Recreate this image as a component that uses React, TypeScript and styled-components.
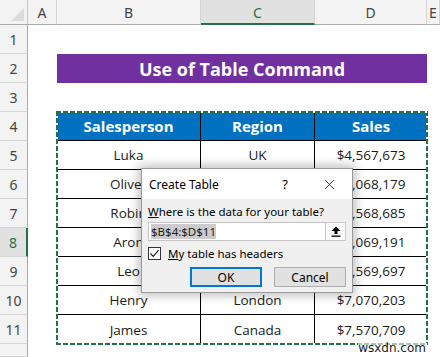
import styled, { createGlobalStyle } from 'styled-components';

const GlobalStyle = createGlobalStyle`
  html, body {
    margin: 0;
    padding: 0;
    background: #ffffff;
    overflow: hidden;
  }
`;

const GREEN = '#217346';

const columns = ['A', 'B', 'C', 'D', 'E'];
const selectedColumn = 'C';
const selectedRow = 8;

const rows = [
  { name: 'Luka', region: 'UK', sales: '$4,567,673' },
  { name: 'Oliver', region: 'USA', sales: '$5,068,179' },
  { name: 'Robin', region: 'Canada', sales: '$5,568,685' },
  { name: 'Aron', region: 'UK', sales: '$6,069,191' },
  { name: 'Leo', region: 'USA', sales: '$6,569,697' },
  { name: 'Henry', region: 'London', sales: '$7,070,203' },
  { name: 'James', region: 'Canada', sales: '$7,570,709' },
];

export default function App() {
  return (
    <Page>
      <GlobalStyle />
      <Sheet>
        <Corner />
        {columns.map((c) => (
          <ColHeader key={c} $selected={c === selectedColumn}>
            {c}
          </ColHeader>
        ))}
        {Array.from({ length: 12 }, (_, i) => (
          <RowHeader key={i} $row={i + 1} $selected={i + 1 === selectedRow}>
            {i < 11 ? i + 1 : ''}
          </RowHeader>
        ))}

        <TitleBar>Use of Table Command</TitleBar>

        <DataTable>
          <HeadCell>Salesperson</HeadCell>
          <HeadCell>Region</HeadCell>
          <HeadCell $last>Sales</HeadCell>
          {rows.map((r, i) => {
            const bottom = i === rows.length - 1;
            return [
              <Cell key={`n${i}`} $bottom={bottom}>
                {r.name}
              </Cell>,
              <Cell key={`r${i}`} $bottom={bottom}>
                {r.region}
              </Cell>,
              <Cell key={`s${i}`} $bottom={bottom} $last>
                {r.sales}
              </Cell>,
            ];
          })}
          <Marquee />
        </DataTable>
      </Sheet>

      <Dialog>
        <DialogTitle>
          <span>Create Table</span>
          <TitleButtons>
            <span>?</span>
            <CloseIcon viewBox="0 0 12 12">
              <path d="M1 1 L11 11 M11 1 L1 11" stroke="#333" strokeWidth="1" />
            </CloseIcon>
          </TitleButtons>
        </DialogTitle>
        <DialogBody>
          <FieldLabel>
            <u>W</u>here is the data for your table?
          </FieldLabel>
          <RangeInput>
            <RangeText>
              <Selected>$B$4:$D$11</Selected>
            </RangeText>
            <RangeButton>
              <svg width="10" height="11" viewBox="0 0 10 11">
                <path d="M5 0.5 L9.5 5 L6.5 5 L6.5 8 L3.5 8 L3.5 5 L0.5 5 Z" fill="#000" />
                <rect x="0.5" y="9.5" width="9" height="1.3" fill="#000" />
              </svg>
            </RangeButton>
          </RangeInput>
          <CheckRow>
            <CheckBox>
              <svg width="11" height="11" viewBox="0 0 11 11">
                <path d="M1.5 5.5 L4.2 8.3 L9.6 2.2" stroke="#222" strokeWidth="1.2" fill="none" />
              </svg>
            </CheckBox>
            <span>
              <u>M</u>y table has headers
            </span>
          </CheckRow>
          <Buttons>
            <DialogButton $primary>OK</DialogButton>
            <DialogButton>Cancel</DialogButton>
          </Buttons>
        </DialogBody>
      </Dialog>

      <Watermark>wsxdn.com</Watermark>
    </Page>
  );
}

const Page = styled.div`
  position: relative;
  width: 440px;
  height: 357px;
  overflow: hidden;
  background: #ffffff;
`;

const Sheet = styled.div`
  display: grid;
  grid-template-columns: 28px 29px 144px 114px 112px 1fr;
  grid-template-rows: 25px repeat(11, 29px) 1fr;
  height: 100%;
`;

const Corner = styled.div`
  grid-row: 1;
  grid-column: 1;
  position: relative;
  background: #f3f3f3;
  border-right: 1px solid #c6c6c6;
  border-bottom: 1px solid #ababab;

  &::after {
    content: '';
    position: absolute;
    right: 3px;
    bottom: 3px;
    width: 0;
    height: 0;
    border-left: 13px solid transparent;
    border-bottom: 13px solid #dcdcdc;
  }
`;

const ColHeader = styled.div<{ $selected?: boolean }>`
  grid-row: 1;
  display: flex;
  align-items: center;
  justify-content: center;
  background: ${(p) => (p.$selected ? '#e1e1e1' : '#f3f3f3')};
  color: ${(p) => (p.$selected ? GREEN : '#444')};
  border-right: 1px solid #d4d4d4;
  border-bottom: ${(p) => (p.$selected ? `2px solid ${GREEN}` : '1px solid #ababab')};
  font-family: 'Noto Sans', 'Open Sans', sans-serif;
  font-size: 14px;
  padding-top: ${(p) => (p.$selected ? '1px' : '0')};
`;

const RowHeader = styled.div<{ $row: number; $selected?: boolean }>`
  grid-column: 1;
  grid-row: ${(p) => p.$row + 1};
  display: flex;
  align-items: center;
  justify-content: center;
  background: ${(p) => (p.$selected ? '#e1e1e1' : '#f3f3f3')};
  color: ${(p) => (p.$selected ? GREEN : '#444')};
  border-right: ${(p) => (p.$selected ? `2px solid ${GREEN}` : '1px solid #ababab')};
  border-bottom: 1px solid #d4d4d4;
  font-family: 'Noto Sans', 'Open Sans', sans-serif;
  font-size: 14px;
`;

const TitleBar = styled.div`
  grid-row: 3;
  grid-column: 3 / 6;
  display: flex;
  align-items: center;
  justify-content: center;
  background: #7030a0;
  color: #ffffff;
  font-family: 'Open Sans', sans-serif;
  font-weight: 700;
  font-size: 18px;
`;

const DataTable = styled.div`
  grid-row: 5 / 13;
  grid-column: 3 / 6;
  position: relative;
  display: grid;
  grid-template-columns: 144px 114px 112px;
  grid-template-rows: repeat(8, 29px);
  font-family: 'Open Sans', sans-serif;
  font-size: 13.5px;
  color: #1a1a1a;
`;

const HeadCell = styled.div<{ $last?: boolean }>`
  display: flex;
  align-items: center;
  justify-content: center;
  background: #0070c0;
  color: #ffffff;
  font-weight: 700;
  font-size: 15px;
  border-right: ${(p) => (p.$last ? 'none' : '1px solid #000')};
  border-bottom: 1px solid #000;
`;

const Cell = styled.div<{ $last?: boolean; $bottom?: boolean }>`
  display: flex;
  align-items: center;
  justify-content: center;
  background: #ffffff;
  border-right: ${(p) => (p.$last ? 'none' : '1px solid #000')};
  border-bottom: ${(p) => (p.$bottom ? 'none' : '1px solid #000')};
`;

const Marquee = styled.div`
  position: absolute;
  inset: -1px -1px -1px -1px;
  pointer-events: none;
  background-image:
    repeating-linear-gradient(90deg, ${GREEN} 0 5px, #ffffff 5px 7px),
    repeating-linear-gradient(90deg, ${GREEN} 0 5px, #ffffff 5px 7px),
    repeating-linear-gradient(180deg, ${GREEN} 0 5px, #ffffff 5px 7px),
    repeating-linear-gradient(180deg, ${GREEN} 0 5px, #ffffff 5px 7px);
  background-size: 100% 2px, 100% 2px, 2px 100%, 2px 100%;
  background-position: top left, bottom left, top left, top right;
  background-repeat: no-repeat;
`;

const Dialog = styled.div`
  position: absolute;
  left: 141px;
  top: 168px;
  width: 212px;
  height: 125px;
  display: flex;
  flex-direction: column;
  background: #f0f0f0;
  border: 1px solid #9a9a9a;
  box-sizing: border-box;
  box-shadow: 0 0 10px 2px rgba(0, 0, 0, 0.28);
  font-family: 'Noto Sans', 'Open Sans', sans-serif;
  color: #000;
`;

const DialogTitle = styled.div`
  height: 30px;
  display: flex;
  align-items: center;
  justify-content: space-between;
  padding: 0 17px 0 7px;
  background: #ffffff;
  font-size: 12px;
`;

const TitleButtons = styled.div`
  display: flex;
  align-items: center;
  gap: 36px;
  font-size: 13px;
`;

const CloseIcon = styled.svg`
  width: 11px;
  height: 11px;
`;

const DialogBody = styled.div`
  flex: 1;
  display: flex;
  flex-direction: column;
  padding: 5px 6px 0 6px;
  font-size: 11.5px;
`;

const FieldLabel = styled.div`
  line-height: 16px;
  margin-bottom: 2px;
`;

const RangeInput = styled.div`
  height: 19px;
  display: flex;
  background: #ffffff;
  border: 1px solid #c4c4c4;
  box-sizing: border-box;
`;

const RangeText = styled.div`
  flex: 1;
  display: flex;
  align-items: center;
  padding-left: 2px;
`;

const Selected = styled.span`
  background: #cccccc;
  color: #1a1a1a;
  line-height: 15px;
`;

const RangeButton = styled.div`
  width: 19px;
  display: flex;
  align-items: center;
  justify-content: center;
  border-left: 1px solid #c4c4c4;
  background: #fafafa;
`;

const CheckRow = styled.div`
  display: flex;
  align-items: center;
  gap: 7px;
  margin-top: 5px;
  height: 14px;
`;

const CheckBox = styled.div`
  width: 11px;
  height: 11px;
  border: 1px solid #333;
  background: #ffffff;
  display: flex;
  align-items: center;
  justify-content: center;
`;

const Buttons = styled.div`
  display: flex;
  justify-content: flex-end;
  gap: 12px;
  margin-top: 7px;
`;

const DialogButton = styled.div<{ $primary?: boolean }>`
  width: 72px;
  height: 20px;
  box-sizing: border-box;
  display: flex;
  align-items: center;
  justify-content: center;
  background: #e1e1e1;
  border: ${(p) => (p.$primary ? '2px solid #0078d7' : '1px solid #adadad')};
  font-size: 12px;
`;

const Watermark = styled.div`
  position: absolute;
  right: 14px;
  bottom: 2px;
  font-family: 'DejaVu Sans', sans-serif;
  font-size: 12px;
  color: #1a1a1a;
  background: rgba(255, 255, 255, 0.6);
`;
